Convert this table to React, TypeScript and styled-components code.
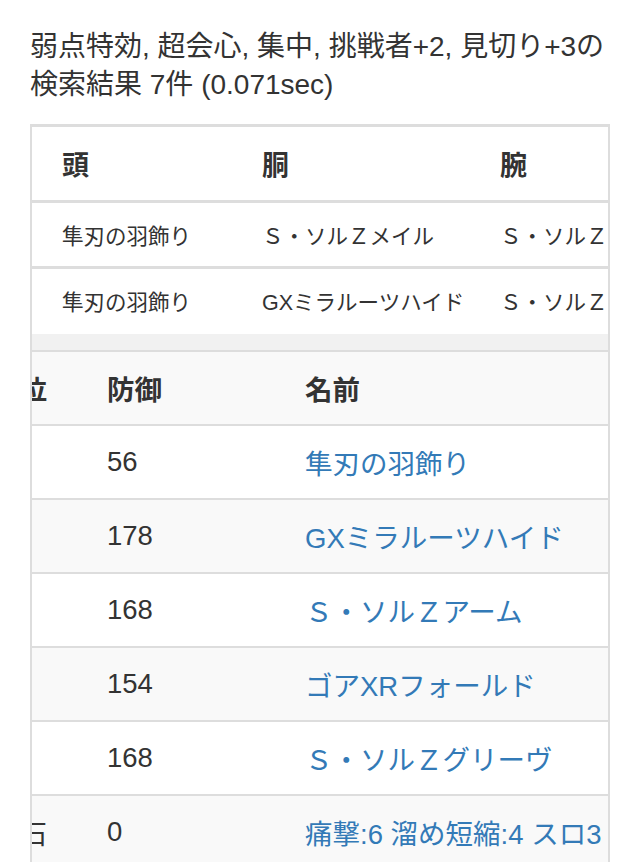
import React from 'react';
import styled, { createGlobalStyle } from 'styled-components';

const GlobalStyle = createGlobalStyle`
  html, body {
    margin: 0;
    padding: 0;
    background: #ffffff;
  }
  body {
    font-family: "Liberation Sans", "Noto Sans CJK JP", sans-serif;
    color: #333333;
  }
`;

const Page = styled.div`
  width: 639px;
  height: 862px;
  overflow: hidden;
  box-sizing: border-box;
  padding: 28px 29px 0 30px;
`;

const Summary = styled.p`
  margin: 0 0 20px;
  font-size: 28px;
  line-height: 38px;
  color: #333333;
  white-space: nowrap;
`;

const Frame = styled.div`
  width: 580px;
  box-sizing: border-box;
  border: 2px solid #dddddd;
  border-top-width: 3px;
  border-bottom: 0;
  overflow: hidden;
`;

const SetRow = styled.div<{ $head?: boolean; $h: number; $first?: boolean; $tail?: number }>`
  display: grid;
  grid-template-columns: 200px 238px 1fr;
  align-items: center;
  box-sizing: border-box;
  height: ${(p) => p.$h + (p.$first ? 0 : 3)}px;
  padding-bottom: ${(p) => p.$tail ?? 0}px;
  border-top: ${(p) => (p.$first ? 0 : 3)}px solid #dddddd;
  font-size: ${(p) => (p.$head ? 27 : 21.5)}px;
  font-weight: ${(p) => (p.$head ? 700 : 400)};
  background: #ffffff;
`;

const SetCell = styled.div`
  padding-left: 30px;
  white-space: nowrap;
  overflow: hidden;
`;

const ScrollGap = styled.div`
  height: 16px;
  background: #f1f1f1;
  border-bottom: 2px solid #dddddd;
`;

const PartsRow = styled.div<{ $striped: boolean; $first?: boolean }>`
  display: grid;
  grid-template-columns: 45px 198px 1fr;
  align-items: center;
  height: 72px;
  border-top: ${(p) => (p.$first ? 0 : 2)}px solid #dddddd;
  background: ${(p) => (p.$striped ? '#f9f9f9' : '#ffffff')};
  font-size: 27.5px;
`;

const PartsHead = styled(PartsRow)`
  font-weight: 700;
`;

/* The slot column is scrolled out of view to the left: only the
   right part of two-character labels stays visible. */
const ClippedCell = styled.div`
  display: flex;
  justify-content: flex-end;
  padding-right: 30px;
  white-space: nowrap;

  span {
    flex-shrink: 0;
    width: 2em;
    text-align: left;
  }
`;

const PartsCell = styled.div`
  padding-left: 30px;
  white-space: nowrap;
`;

const NameLink = styled.a`
  color: #337ab7;
  text-decoration: none;
  white-space: nowrap;
`;

const sets = [
  ['隼刃の羽飾り', 'Ｓ・ソルＺメイル', 'Ｓ・ソルＺアーム'],
  ['隼刃の羽飾り', 'GXミラルーツハイド', 'Ｓ・ソルＺアーム'],
];

const parts = [
  { slot: '頭', def: '56', name: '隼刃の羽飾り' },
  { slot: '胴', def: '178', name: 'GXミラルーツハイド' },
  { slot: '腕', def: '168', name: 'Ｓ・ソルＺアーム' },
  { slot: '腰', def: '154', name: 'ゴアXRフォールド' },
  { slot: '脚', def: '168', name: 'Ｓ・ソルＺグリーヴ' },
  { slot: '護石', def: '0', name: '痛撃:6 溜め短縮:4 スロ3' },
];

export default function App() {
  return (
    <>
      <GlobalStyle />
      <Page>
        <Summary>
          弱点特効, 超会心, 集中, 挑戦者+2, 見切り+3の
          <br />
          検索結果 7件 (0.071sec)
        </Summary>
        <Frame>
          <SetRow $head $h={73} $first>
            <SetCell>頭</SetCell>
            <SetCell>胴</SetCell>
            <SetCell>腕</SetCell>
          </SetRow>
          {sets.map((s, i) => (
            <SetRow key={i} $h={i === 0 ? 63 : 65} $tail={i === 0 ? 0 : 2}>
              {s.map((c, j) => (
                <SetCell key={j}>{c}</SetCell>
              ))}
            </SetRow>
          ))}
          <ScrollGap />
          <PartsHead $striped $first>
            <ClippedCell>
              <span>部位</span>
            </ClippedCell>
            <PartsCell>防御</PartsCell>
            <PartsCell>名前</PartsCell>
          </PartsHead>
          {parts.map((p, i) => (
            <PartsRow key={i} $striped={i % 2 === 1}>
              <ClippedCell>
                <span>{p.slot}</span>
              </ClippedCell>
              <PartsCell>{p.def}</PartsCell>
              <PartsCell>
                <NameLink href="#">{p.name}</NameLink>
              </PartsCell>
            </PartsRow>
          ))}
        </Frame>
      </Page>
    </>
  );
}
